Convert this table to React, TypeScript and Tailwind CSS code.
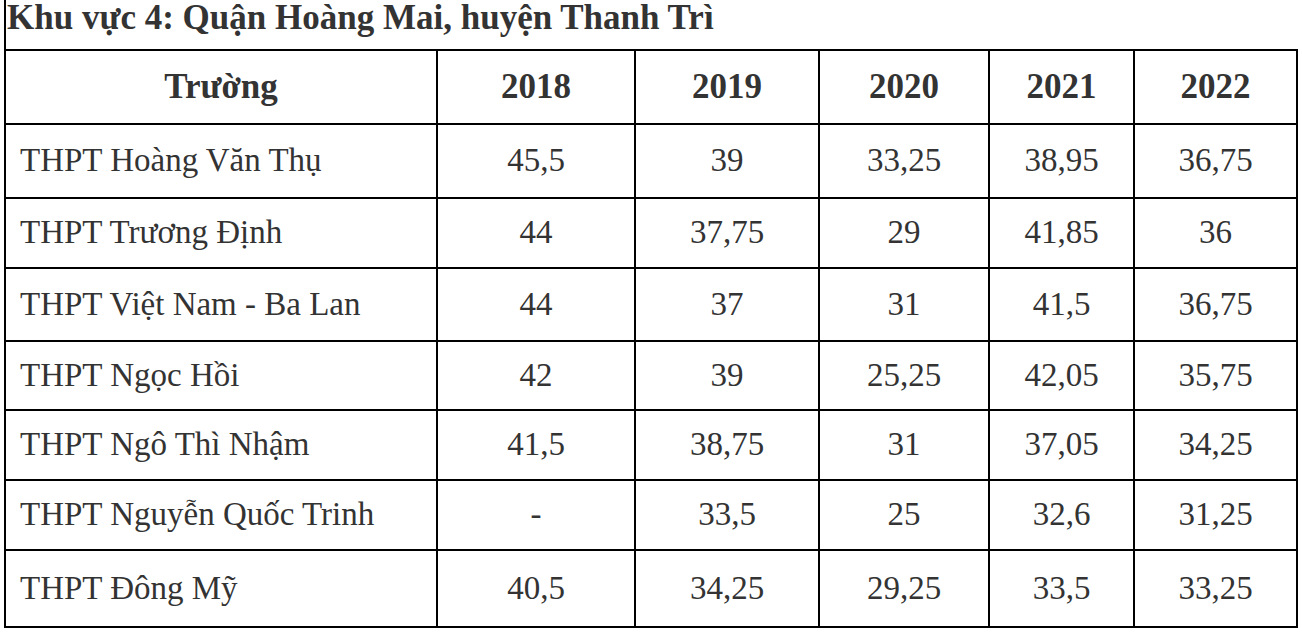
const years = ["2018", "2019", "2020", "2021", "2022"];

const rows = [
  { name: "THPT Hoàng Văn Thụ", scores: ["45,5", "39", "33,25", "38,95", "36,75"], h: "h-[74px]" },
  { name: "THPT Trương Định", scores: ["44", "37,75", "29", "41,85", "36"], h: "h-[70px]" },
  { name: "THPT Việt Nam - Ba Lan", scores: ["44", "37", "31", "41,5", "36,75"], h: "h-[73px]" },
  { name: "THPT Ngọc Hồi", scores: ["42", "39", "25,25", "42,05", "35,75"], h: "h-[69px]" },
  { name: "THPT Ngô Thì Nhậm", scores: ["41,5", "38,75", "31", "37,05", "34,25"], h: "h-[70px]" },
  { name: "THPT Nguyễn Quốc Trinh", scores: ["-", "33,5", "25", "32,6", "31,25"], h: "h-[70px]" },
  { name: "THPT Đông Mỹ", scores: ["40,5", "34,25", "29,25", "33,5", "33,25"], h: "h-[77px]" },
];

const colWidths = ["w-[432px]", "w-[198px]", "w-[184px]", "w-[170px]", "w-[145px]", "w-[163px]"];

export default function App() {
  return (
    <div className="min-h-screen bg-white text-[#333333] font-['Liberation_Serif','Times_New_Roman',serif]">
      <div className="ml-[4px] mt-[10px] border-l-2 border-black">
        <h2 className="-mt-[10px] mb-[13px] pl-[1px] text-[35px] font-bold leading-[36px]">
          Khu vực 4: Quận Hoàng Mai, huyện Thanh Trì
        </h2>

        <table className="-ml-[2px] border-collapse table-fixed w-[1294px]">
          <colgroup>
            {colWidths.map((w, i) => (
              <col key={i} className={w} />
            ))}
          </colgroup>
          <thead>
            <tr>
              <th className="h-[74px] border-2 border-black text-center text-[35px] font-bold">
                Trường
              </th>
              {years.map((y) => (
                <th key={y} className="h-[74px] border-2 border-black text-center text-[35px] font-bold">
                  {y}
                </th>
              ))}
            </tr>
          </thead>
          <tbody>
            {rows.map((r) => (
              <tr key={r.name}>
                <td className={`${r.h} border-2 border-black pl-[14px] text-left text-[33px]`}>
                  {r.name}
                </td>
                {r.scores.map((s, i) => (
                  <td key={i} className={`${r.h} border-2 border-black text-center text-[33px]`}>
                    {s}
                  </td>
                ))}
              </tr>
            ))}
          </tbody>
        </table>
      </div>
    </div>
  );
}
